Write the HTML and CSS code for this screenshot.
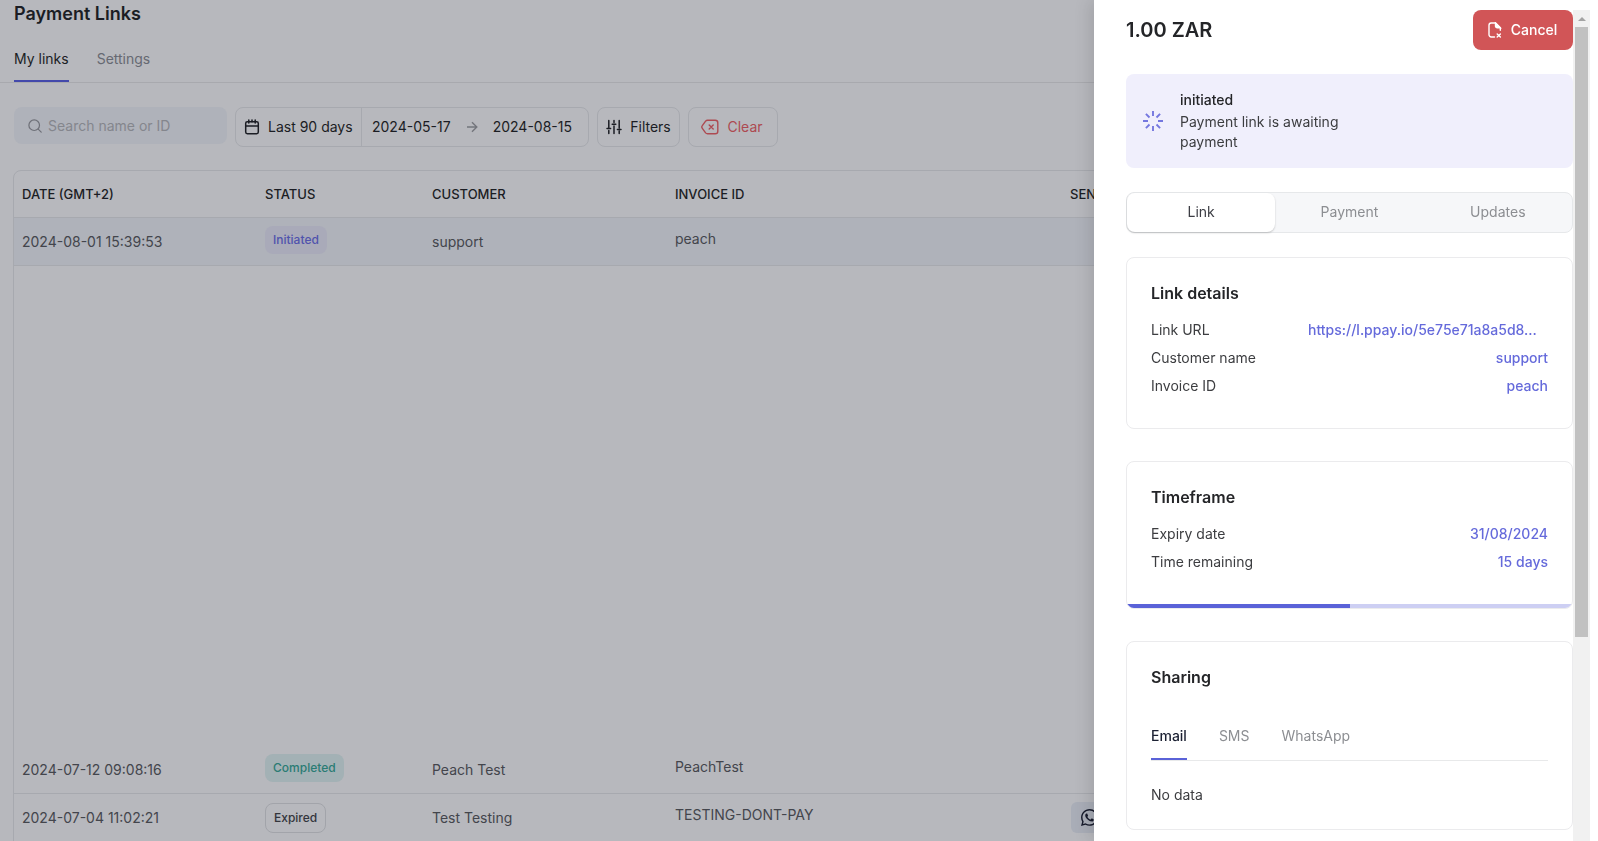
FILE: index.html
```html
<!DOCTYPE html>
<html lang="en">
<head>
<meta charset="utf-8">
<title>Payment Links</title>
<link rel="stylesheet" href="styles.css">
</head>
<body>
<main class="page">
  <h1 class="page-title">Payment Links</h1>
  <nav class="tabs">
    <a class="tab tab-active" href="#links">My links</a>
    <a class="tab" href="#settings">Settings</a>
  </nav>

  <div class="toolbar">
    <label class="search">
      <svg class="icon-search" viewBox="0 0 14 14" width="14" height="14" fill="none" stroke="currentColor" stroke-width="1.2" stroke-linecap="round"><circle cx="6.2" cy="6.2" r="5.3"/><path d="M10.2 10.2l3 3"/></svg>
      <input class="search-input" type="search" placeholder="Search name or ID" aria-label="Search name or ID">
    </label>
    <div class="range">
      <button class="range-preset" type="button">
        <svg viewBox="0 0 16 16" width="16" height="16" fill="none" stroke="currentColor" stroke-width="1.5" stroke-linecap="round"><rect x="1.7" y="2.7" width="12.6" height="12" rx="1.6"/><path d="M1.7 7h12.6M4.8 1v3M11.2 1v3M8 1v1.7"/></svg>
        <span>Last 90 days</span>
      </button>
      <button class="range-dates" type="button">
        <span>2024-05-17</span>
        <svg class="icon-arrow" viewBox="0 0 12 12" width="12" height="12" fill="none" stroke="currentColor" stroke-width="1.4"><path d="M1 6h9.500M6 1.200L10.800 6 6 10.800"/></svg>
        <span>2024-08-15</span>
      </button>
    </div>
    <button class="btn btn-filters" type="button">
      <svg viewBox="0 0 16 16" width="16" height="16" fill="none" stroke="currentColor" stroke-width="1.5" stroke-linecap="round"><path d="M2.8 1.500v7M2.800 11.500v3M1 9.500h3.600M8 1.500v2M8 7v7.500M6.200 5.200h3.600M13.200 1.500v7.500M13.200 12v2.500M11.400 10.500H15"/></svg>
      <span>Filters</span>
    </button>
    <button class="btn btn-clear" type="button">
      <svg viewBox="0 0 18 16" width="18" height="16" fill="none" stroke="currentColor" stroke-width="1.4" stroke-linecap="round" stroke-linejoin="round"><path d="M6.6 1.2h7.6a2.6 2.6 0 0 1 2.6 2.6v8.4a2.6 2.6 0 0 1-2.6 2.6H6.6a2.6 2.6 0 0 1-2-.9L1.5 9.6a2.4 2.4 0 0 1 0-3.2l3.1-4.3a2.6 2.6 0 0 1 2-.9zM8.2 6l4 4M12.2 6l-4 4"/></svg>
      <span>Clear</span>
    </button>
  </div>

  <div class="table-wrap">
    <table class="links">
      <colgroup><col class="col-wide"><col class="col-status"><col class="col-wide"><col class="col-invoice"><col></colgroup>
      <thead>
        <tr><th>DATE (GMT+2)</th><th>STATUS</th><th>CUSTOMER</th><th>INVOICE ID</th><th>SENT</th></tr>
      </thead>
      <tbody>
        <tr class="row-selected"><td class="cell-low">2024-08-01 15:39:53</td><td><span class="badge badge-initiated">Initiated</span></td><td class="cell-low">support</td><td class="cell-high">peach</td><td></td></tr>
        <tr class="row-gap"><td colspan="5"></td></tr>
        <tr><td class="cell-low">2024-07-12 09:08:16</td><td><span class="badge badge-completed">Completed</span></td><td class="cell-low">Peach Test</td><td class="cell-high">PeachTest</td><td></td></tr>
        <tr><td class="cell-low">2024-07-04 11:02:21</td><td class="cell-low"><span class="badge badge-expired">Expired</span></td><td class="cell-low">Test Testing</td><td class="cell-high">TESTING-DONT-PAY</td>
          <td><button class="sent" type="button" aria-label="Sent by WhatsApp">
            <svg viewBox="0 0 16 16" width="17" height="17" fill="currentColor"><path d="M13.6 2.33A7.85 7.85 0 0 0 8 0C3.63 0 .07 3.56.06 7.93c0 1.4.37 2.76 1.06 3.96L0 16l4.2-1.1a7.9 7.9 0 0 0 3.79.96c4.37 0 7.93-3.56 7.93-7.93A7.9 7.9 0 0 0 13.6 2.33zM8 14.52a6.6 6.6 0 0 1-3.36-.92l-.24-.14-2.5.65.67-2.43-.16-.25a6.56 6.56 0 0 1-1-3.5C1.4 4.3 4.350 1.34 8 1.34a6.56 6.56 0 0 1 6.59 6.6c0 3.63-2.96 6.58-6.6 6.58zm3.61-4.93c-.2-.1-1.17-.58-1.35-.65-.18-.06-.31-.1-.45.1-.13.2-.5.65-.62.78-.11.13-.23.15-.42.05-.2-.1-.84-.31-1.6-.98a6 6 0 0 1-1.1-1.38c-.12-.2-.01-.3.09-.4.09-.09.2-.23.3-.34.1-.12.13-.2.2-.33.06-.14.03-.25-.02-.35-.05-.1-.45-1.08-.61-1.47-.16-.39-.33-.33-.45-.34h-.38a.73.73 0 0 0-.53.25c-.18.2-.69.68-.69 1.65 0 .98.71 1.92.81 2.05.1.13 1.4 2.13 3.39 2.99.47.2.84.33 1.13.42.48.15.91.13 1.25.08.38-.06 1.17-.48 1.34-.94.16-.47.16-.86.11-.95-.05-.08-.18-.13-.38-.23z"/></svg>
          </button></td></tr>
      </tbody>
    </table>
  </div>
</main>

<aside class="drawer" aria-label="Payment link details">
  <div class="drawer-body">
    <header class="drawer-head">
      <h2 class="amount">1.00 ZAR</h2>
      <button class="btn-cancel" type="button">
        <svg viewBox="0 0 16 16" width="16" height="16" fill="none" stroke="currentColor" stroke-width="1.4" stroke-linecap="round"><path d="M7.500 15H4.200A2.2 2.200 0 0 1 2 12.800V3.200A2.200 2.200 0 0 1 4.200 1H8.500l4.800 4.800v2.400M10.200 12l3.200 3M13.400 12l-3.200 3"/><path d="M8.500 1v3a1.800 1.800 0 0 0 1.800 1.800h3z" fill="currentColor"/></svg>
        <span>Cancel</span>
      </button>
    </header>

    <section class="notice">
      <svg class="icon-spin" viewBox="0 0 20 20" width="20" height="20" fill="none" stroke="currentColor" stroke-width="1.9"><path d="M10 0v5M10 15v5M0 10h5M15 10h5M2.900 2.900l3.600 3.600M13.500 13.500l3.600 3.600M2.900 17.100l3.600-3.600M13.500 6.500l3.600-3.600"/></svg>
      <div class="notice-text">
        <strong class="notice-title">initiated</strong>
        <p class="notice-copy">Payment link is awaiting payment</p>
      </div>
    </section>

    <div class="segments">
      <button class="segment segment-active" type="button">Link</button>
      <button class="segment" type="button">Payment</button>
      <button class="segment" type="button">Updates</button>
    </div>

    <section class="card">
      <h3 class="card-title">Link details</h3>
      <dl class="facts">
        <div class="fact"><dt>Link URL</dt><dd class="fact-url"><a href="#url">https://l.ppay.io/5e75e71a8a5d8...</a></dd></div>
        <div class="fact"><dt>Customer name</dt><dd>support</dd></div>
        <div class="fact"><dt>Invoice ID</dt><dd>peach</dd></div>
      </dl>
    </section>

    <section class="card card-time">
      <h3 class="card-title">Timeframe</h3>
      <dl class="facts">
        <div class="fact"><dt>Expiry date</dt><dd>31/08/2024</dd></div>
        <div class="fact"><dt>Time remaining</dt><dd>15 days</dd></div>
      </dl>
      <div class="progress"><div class="progress-fill" style="width:50%"></div></div>
    </section>

    <section class="card card-share">
      <h3 class="card-title">Sharing</h3>
      <nav class="share-tabs">
        <a class="share-tab share-active" href="#email">Email</a>
        <a class="share-tab" href="#sms">SMS</a>
        <a class="share-tab" href="#whatsapp">WhatsApp</a>
      </nav>
      <p class="empty">No data</p>
    </section>
  </div>
  <div class="scrollbar" aria-hidden="true">
    <svg class="scroll-up" viewBox="0 0 8 4" width="8" height="4" fill="#a3a3a3"><path d="M4 0l4 4H0z"/></svg>
    <div class="scroll-thumb"></div>
  </div>
</aside>
</body>
</html>
```
FILE: styles.css
```css
* { box-sizing: border-box; }
body {
  margin: 0;
  height: 100vh;
  overflow: hidden;
  background: #b7b8bd;
  color: #1b1d24;
  font-family: Inter, "Liberation Sans", sans-serif;
  font-size: 14px;
  line-height: 20px;
}
h1, h2, h3, p, dl, dd { margin: 0; }
a { color: inherit; text-decoration: none; }
button { font: inherit; color: inherit; background: none; border: 0; padding: 0; }
svg { flex: none; display: block; }

.page-title { padding: 2px 14px 0; font-size: 18px; line-height: 24px; font-weight: 600; }
.tabs { display: flex; gap: 28px; margin-top: 23px; padding: 0 14px; border-bottom: 1px solid #a8a9ae; }
.tab { height: 33px; color: #666972; }
.tab-active { color: #1b1d24; border-bottom: 2px solid #4349ab; }

.toolbar { display: flex; align-items: flex-start; gap: 8px; padding: 24px 14px 23px; }
.search { display: flex; align-items: center; gap: 6px; width: 213px; height: 37px; padding: 0 14px; border-radius: 8px; background: #afb2ba; color: #6e7078; }
.search-input { flex: 1; min-width: 0; padding: 0; border: 0; outline: 0; background: none; font: inherit; }
.search-input::placeholder { color: #84868d; opacity: 1; }
.range { display: flex; height: 40px; border: 1px solid #a7a9af; border-radius: 8px; }
.range-preset { display: flex; align-items: center; gap: 8px; width: 126px; padding-left: 8px; border-right: 1px solid #a7a9af; }
.range-dates { display: flex; align-items: center; justify-content: space-between; width: 226px; padding: 0 16px 0 10px; }
.icon-arrow { color: #73757c; }
.btn { display: flex; align-items: center; justify-content: center; gap: 8px; height: 40px; border: 1px solid #a7a9af; border-radius: 8px; }
.btn-filters { width: 83px; }
.btn-clear { width: 90px; padding-right: 2px; color: #ad4a51; }

.table-wrap { margin: 0 14px 0 13px; border: 1px solid #a7a9af; border-radius: 8px 8px 0 0; }
.links { width: 100%; table-layout: fixed; border-collapse: separate; border-spacing: 0; }
.col-wide { width: 243px; }
.col-status { width: 167px; }
.col-invoice { width: 395px; }
.links th, .links td { padding: 0 8px; text-align: left; border-bottom: 1px solid #a7a9af; }
.links th { height: 47px; font-size: 13px; font-weight: 500; }
.links td { height: 48px; padding-bottom: 4px; color: #43454c; }
.links .cell-low { padding-bottom: 0; }
.links .cell-high { padding-bottom: 6px; }
.row-selected td { background: #afb2ba; }
.links .row-gap td { height: 480px; border: 0; }
.badge { display: inline-block; padding: 4px 8px; border-radius: 8px; font-size: 12px; font-weight: 500; vertical-align: middle; }
.badge-initiated { background: #a9aab9; color: #5053ad; }
.badge-completed { background: #a3b1b5; color: #2a7c74; }
.badge-expired { border: 1px solid #a2a4aa; color: #33353c; }
.sent { display: flex; align-items: center; justify-content: center; width: 36px; height: 31px; margin: 4px 0 0 1px; border-radius: 6px; background: #a9adb7; color: #161a2b; }

.drawer { position: fixed; top: 0; right: 0; bottom: 0; width: 504px; display: flex; padding: 10px 8px 0 32px; background: #fff; color: #3c3d40; box-shadow: -4px 0 16px rgba(0, 0, 0, .12); }
.drawer-body { flex: 1; min-width: 0; overflow: hidden; }
.drawer-head { display: flex; align-items: center; justify-content: space-between; }
.amount { font-size: 20px; line-height: 28px; font-weight: 600; color: #242528; }
.btn-cancel { display: flex; align-items: center; justify-content: center; gap: 8px; width: 100px; height: 40px; padding-right: 2px; border-radius: 8px; background: #d15557; color: #fff; font-weight: 500; }
.notice { display: flex; align-items: center; gap: 17px; margin-top: 24px; padding: 16px 17px; border-radius: 8px; background: #f0effc; }
.icon-spin { color: #7477df; }
.notice-text { width: 190px; }
.notice-title { display: block; margin-bottom: 2px; font-weight: 500; color: #242528; }
.segments { display: flex; height: 41px; margin-top: 24px; border: 1px solid #e6e8ea; border-radius: 8px; background: #f6f7f9; }
.segment { flex: 1; padding-bottom: 2px; border-radius: 8px; color: #8c8e92; }
.segment-active { background: #fff; color: #3c3d44; box-shadow: 0 1px 2px rgba(0, 0, 0, .2); }

.card { margin-top: 32px; padding: 23px 24px 28px; border: 1px solid #ebebed; border-radius: 8px; overflow: hidden; }
.segments + .card { margin-top: 24px; }
.card-title { margin-bottom: 11px; font-size: 16px; line-height: 24px; font-weight: 600; color: #242528; }
.fact { display: flex; justify-content: space-between; line-height: 28px; }
.fact dd { color: #656adb; font-weight: 500; }
.fact .fact-url { width: 240px; white-space: nowrap; }
.card-time { padding-bottom: 0; }
.progress { height: 4px; margin: 28px -24px 0; background: #cdcff3; }
.progress-fill { height: 4px; background: #5a62d8; }
.card-share { padding-bottom: 24px; }
.share-tabs { display: flex; gap: 32px; margin-top: 35px; border-bottom: 1px solid #e8e9ea; }
.share-tab { height: 36px; line-height: 24px; color: #8c8e92; }
.share-active { color: #1c2133; font-weight: 500; border-bottom: 2px solid #5a62d8; }
.empty { margin-top: 24px; line-height: 20px; }

.scrollbar { width: 17px; padding: 7px 2px 0; background: #f1f1f1; }
.scroll-up { margin: 0 auto; }
.scroll-thumb { height: 74%; margin-top: 6px; background: #c1c1c1; }
```
